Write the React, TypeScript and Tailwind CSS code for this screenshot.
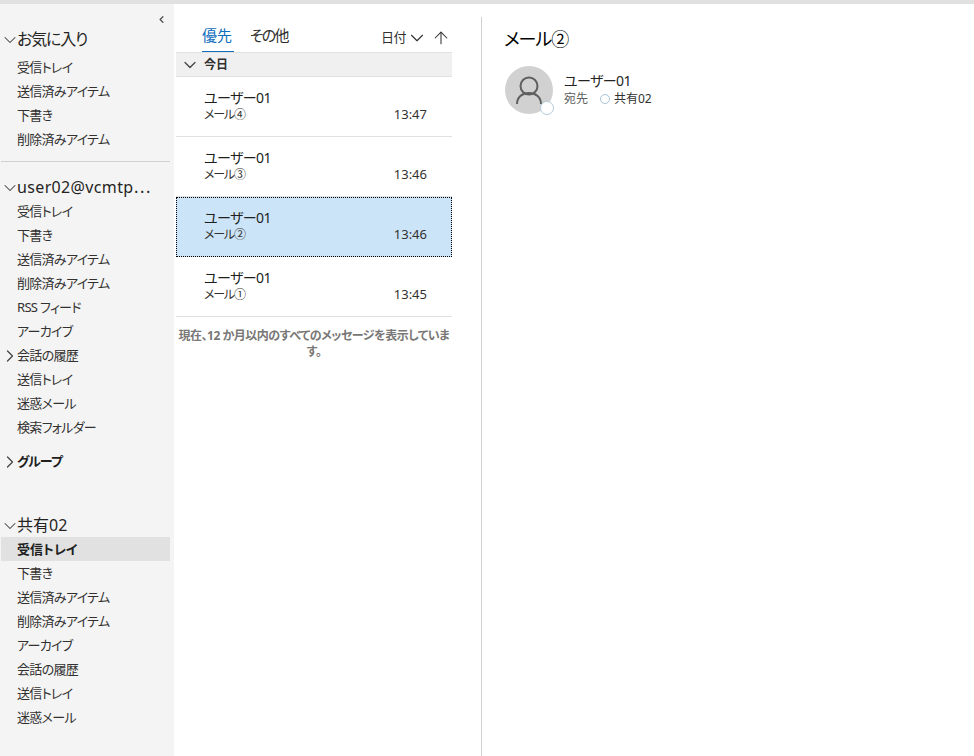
import { ChevronDown, ChevronRight, ChevronLeft, ArrowUp } from 'lucide-react';

const favorites = ['受信トレイ', '送信済みアイテム', '下書き', '削除済みアイテム'];
const userFolders = ['受信トレイ', '下書き', '送信済みアイテム', '削除済みアイテム', 'RSS フィード', 'アーカイブ', '会話の履歴', '送信トレイ', '迷惑メール', '検索フォルダー'];
const sharedFolders = ['受信トレイ', '下書き', '送信済みアイテム', '削除済みアイテム', 'アーカイブ', '会話の履歴', '送信トレイ', '迷惑メール'];
const mails = [
  { subject: 'メール④', time: '13:47' },
  { subject: 'メール③', time: '13:46' },
  { subject: 'メール②', time: '13:46', selected: true },
  { subject: 'メール①', time: '13:45' },
];

function AccountHeader({ label, className = '' }: { label: string; className?: string }) {
  return (
    <div className="relative flex h-6 items-center pl-4 text-[16px] text-[#252423]">
      <ChevronDown size={20} strokeWidth={1.25} className="absolute -left-[1px] mt-0.5 text-[#444]" />
      <span className={`whitespace-nowrap ${className}`}>{label}</span>
    </div>
  );
}

function Folder({ label, active, arrow }: { label: string; active?: boolean; arrow?: boolean }) {
  return (
    <div className={`relative flex h-6 w-[169px] items-center pt-0.5 pl-4 text-[13px] ${active ? 'bg-[#e1e1e1] font-bold text-[#201f1e]' : 'tracking-[-0.7px] text-[#323130]'}`}>
      {arrow && <ChevronRight size={20} strokeWidth={1.5} className="absolute -left-[1px] text-[#444]" />}
      {label}
    </div>
  );
}

function MailRow({ subject, time, selected }: { subject: string; time: string; selected?: boolean }) {
  return (
    <div className={`flex h-[60px] flex-col pt-[11px] ${selected ? 'border border-dotted border-black bg-[#cce4f7] pr-6 pl-[27px]' : 'border-b border-[#e1e1e1] pr-[25px] pl-7'}`}>
      <div className={`text-[14px] leading-[19px] tracking-[-0.6px] text-[#201f1e] ${selected ? '-mt-px' : ''}`}>ユーザー01</div>
      <div className="flex items-center justify-between text-[12px] leading-4 text-[#323130]">
        <span className="tracking-[-1.2px]">{subject}</span>
        <span className="-mt-0.5 text-[13px] leading-4">{time}</span>
      </div>
    </div>
  );
}

export default function App() {
  return (
    <div className="flex h-[756px] w-[974px] flex-col overflow-hidden bg-white font-['Noto_Sans','Noto_Sans_CJK_JP',sans-serif] [font-feature-settings:'palt']">
      <div className="h-1 shrink-0 bg-[#e1e1e1]" />
      <div className="flex min-h-0 flex-1">
        <aside className="w-[174px] shrink-0 bg-[#f4f4f4] pl-px">
          <div className="flex h-[23px] items-end justify-end pr-[7px]">
            <ChevronLeft size={11} strokeWidth={3} className="mb-[2px] text-[#555]" />
          </div>
          <AccountHeader label="お気に入り" className="tracking-[-1.2px]" />
          <div className="mt-1">
            {favorites.map((f) => <Folder key={f} label={f} />)}
          </div>
          <div className="mt-[10px] mb-[13px] w-[169px] border-t border-[#d2d0ce]" />
          <AccountHeader label="user02@vcmtp⋯" className="tracking-[0.35px]" />
          {userFolders.map((f) => <Folder key={f} label={f} arrow={f === '会話の履歴'} />)}
          <div className="relative mt-[10px] flex h-6 items-center pt-0.5 pl-4 text-[13px] font-bold tracking-[-1px] text-[#201f1e]">
            <ChevronRight size={20} strokeWidth={1.5} className="absolute -left-[1px] text-[#444]" />
            グループ
          </div>
          <div className="h-10" />
          <AccountHeader label="共有02" />
          {sharedFolders.map((f, i) => <Folder key={f} label={f} active={i === 0} />)}
        </aside>

        <section className="ml-0.5 w-[276px] shrink-0">
          <div className="flex h-12 items-end pl-[26px]">
            <div className="h-[33px] w-8 border-b border-[#106ebe] text-[15px] leading-[33px] text-[#106ebe]">優先</div>
            <div className="ml-4 h-[33px] text-[15px] leading-[33px] tracking-[-1.8px] text-[#323130]">その他</div>
            <div className="ml-auto flex h-[33px] items-center pt-1 text-[13px] text-[#323130]">
              <span className="tracking-[-0.5px]">日付</span>
              <ChevronDown size={22} strokeWidth={1.25} />
              <ArrowUp size={20} strokeWidth={1.25} className="mr-px ml-[3px]" />
            </div>
          </div>
          <div className="relative flex h-[25px] items-center border-y border-[#e1e1e1] bg-[#f0f0f0] pl-7 text-[12px] font-bold text-[#323130]">
            <ChevronDown size={20} strokeWidth={1.5} className="absolute left-[4px] text-[#444]" />
            今日
          </div>
          {mails.map((m) => <MailRow key={m.subject} {...m} />)}
          <p className="mt-[11px] text-center text-[12px] leading-4 font-bold tracking-[-0.5px] text-[#797775]">
            現在、12 か月以内のすべてのメッセージを表示しています。
          </p>
        </section>

        <main className="mt-[13px] ml-[29px] flex-1 border-l border-[#d2d0ce] pl-[23px]">
          <h1 className="mt-[9px] -ml-px text-[18px] leading-[26px] font-normal tracking-[-1px] text-black">メール②</h1>
          <div className="mt-[14px] flex items-start">
            <div className="relative flex size-12 items-center justify-center rounded-full bg-[#d1d1d1]">
              <svg width="28" height="29" viewBox="0 0 28 29" fill="none" stroke="#5f5f5f" strokeWidth="2">
                <circle cx="14" cy="10" r="8.5" />
                <path d="M2 28c0-6.5 5-11 12-11s12 4.5 12 11" />
              </svg>
              <span className="absolute -right-px -bottom-px size-[14px] rounded-full border-[1.5px] border-[#b4cbd9] bg-white" />
            </div>
            <div className="ml-[11px] pt-[5px]">
              <div className="text-[14px] leading-5 tracking-[-0.6px] text-[#252423]">ユーザー01</div>
              <div className="flex items-center text-[12px] leading-4 text-[#323130]">
                <span className="w-9 text-[#605e5c]">宛先</span>
                <span className="mr-1 size-[10px] rounded-full border border-[#a9c3d3]" />
                共有02
              </div>
            </div>
          </div>
        </main>
      </div>
    </div>
  );
}
